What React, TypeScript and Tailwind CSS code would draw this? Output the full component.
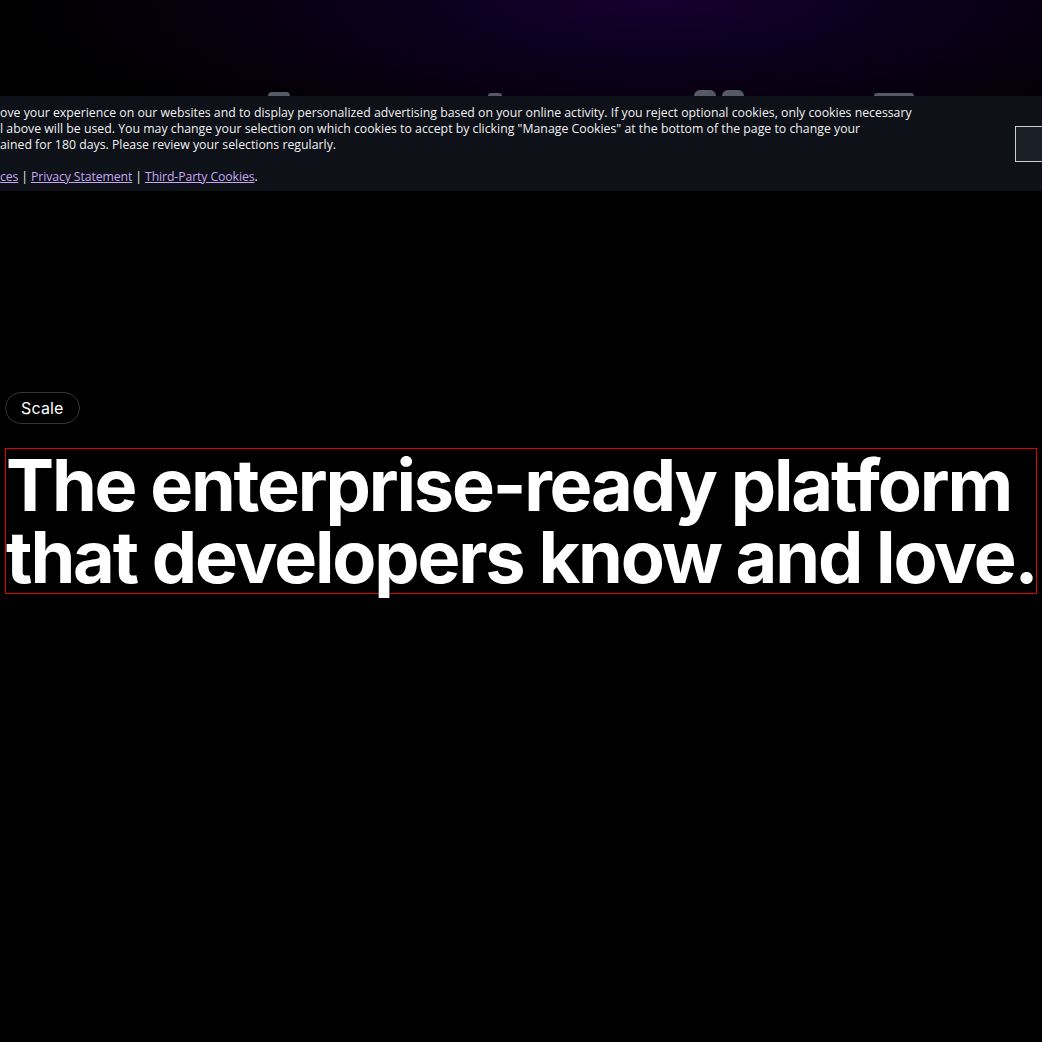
import React from "react";

export default function App() {
  return (
    <div className="min-h-[1042px] w-full overflow-hidden bg-black text-white">
      {/* top header area with purple glow */}
      <div className="flex h-[96px] w-full items-end bg-[radial-gradient(ellipse_62%_170%_at_63%_0%,#150030_0%,#0a0016_50%,#000000_100%)]">
        <div className="flex items-end pl-[268px]">
          <div className="h-[4px] w-[22px] rounded-t-full bg-[#555a66]" />
          <div className="ml-[198px] h-[3px] w-[14px] rounded-t-full bg-[#555a66]" />
          <div className="ml-[192px] h-[6px] w-[22px] rounded-t-full bg-[#555a66]" />
          <div className="ml-[6px] h-[6px] w-[22px] rounded-t-full bg-[#555a66]" />
          <div className="ml-[130px] h-[3px] w-[40px] rounded-t-full bg-[#555a66]" />
        </div>
      </div>

      {/* cookie banner */}
      <div className="flex h-[95px] w-full items-start bg-[#0e1118] pt-[9px] font-['Segoe_UI','Open_Sans',sans-serif] text-[12.3px] leading-[16px] text-[#f0f0f0]">
        <div className="flex-1 whitespace-nowrap">
          <p>ove your experience on our websites and to display personalized advertising based on your online activity. If you reject optional cookies, only cookies necessary</p>
          <p>l above will be used. You may change your selection on which cookies to accept by clicking "Manage Cookies" at the bottom of the page to change your</p>
          <p>ained for 180 days. Please review your selections regularly.</p>
          <p className="mt-[16px] tracking-[-0.01em]">
            <a className="text-[#c7a7f2] underline">ces</a> | <a className="text-[#c7a7f2] underline">Privacy Statement</a> | <a className="text-[#c7a7f2] underline">Third-Party Cookies</a>.
          </p>
        </div>
        <div className="mt-[21px] -mr-[60px] h-[36px] w-[87px] shrink-0 border border-[#c8ccd2] bg-[#1b1f27]" />
      </div>

      {/* hero */}
      <div className="flex flex-col items-start gap-[24px] px-[5px] pt-[201px]">
        <span className="inline-flex h-[32px] items-center rounded-full border border-[#30363d] px-[15px] font-['Inter',sans-serif] text-[16px] font-normal tracking-[0.01em] text-white">
          Scale
        </span>
        <h1 className="w-full whitespace-nowrap border border-[#e00000] font-['Inter',sans-serif] text-[72px] font-bold leading-[72px] tracking-[-0.03em] text-white">
          The enterprise-ready platform
          <br />
          that developers know and love.
        </h1>
      </div>
    </div>
  );
}
